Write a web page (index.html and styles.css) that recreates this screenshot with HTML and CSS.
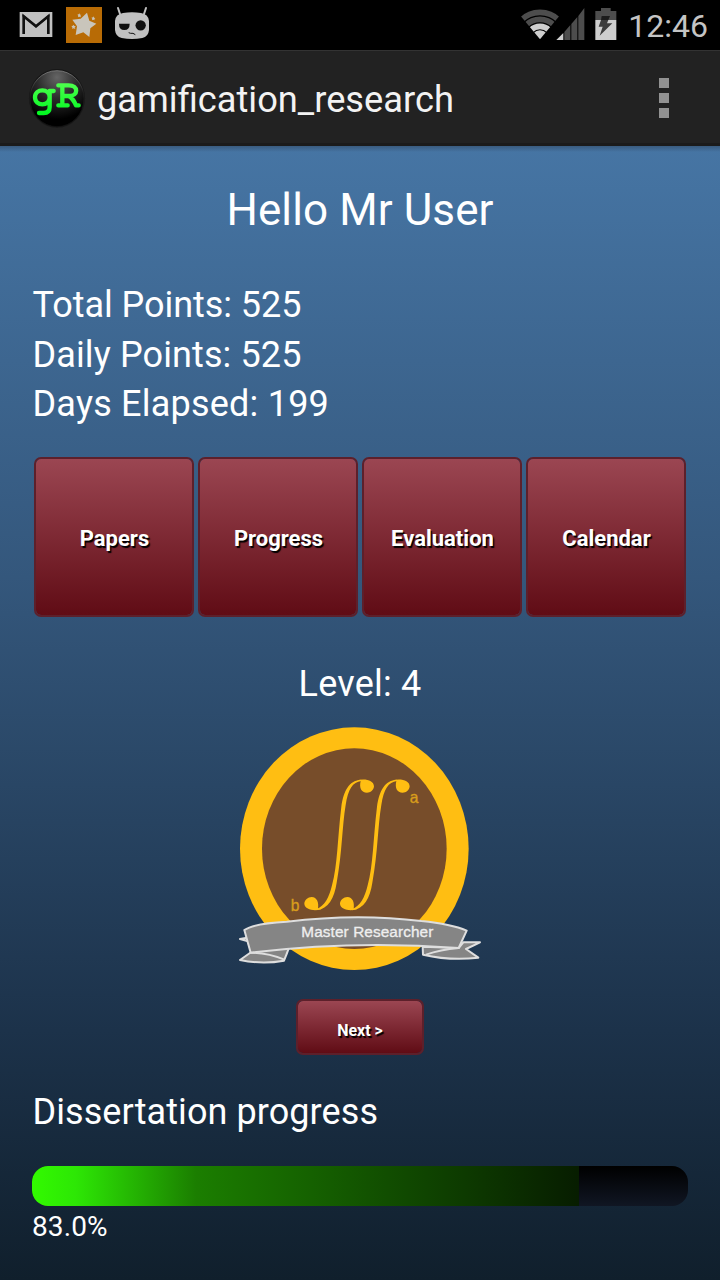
FILE: index.html
```html
<!DOCTYPE html>
<html lang="en">
<head>
<meta charset="utf-8">
<title>gamification_research</title>
<link rel="stylesheet" href="styles.css">
</head>
<body>
<header class="status-bar">
  <svg class="status-left" viewBox="0 0 480 150" aria-hidden="true">
    <path fill="#c1c1c1" d="M59 36h98v75H59z"/>
    <path fill="none" stroke="#111" stroke-width="8" d="M71 102V49l37 30 37-30v53"/>
    <path fill="none" stroke="#111" stroke-width="5" d="M68 46l40 33 40-33"/>
    <path fill="#b86b05" d="M198 21h108v108H198z"/>
    <path fill="#c9c5bb" d="M261 38l7 24 21 9-18 14-3 26-18-14-23 8 4-26-14-20 25-3z"/>
    <path fill="#c9c5bb" d="M238 40l2 4 4 0-3 3 2 5-5-2-4 2 1-5-3-3 4-1zM281 49l1 4 4 1-3 3 1 4-4-2-4 2 1-5-3-3 5-1zM221 74l2 4 5 1-4 3 2 5-5-2-4 2 0-5-3-4 5-1z"/>
    <path fill="none" stroke="#c1c1c1" stroke-width="6" stroke-linecap="round" d="M354 24l6 18M438 24l-6 18"/>
    <path fill="#c1c1c1" d="M369 39q27-4 54 0 22 3 24 24v27q-2 20-20 24-31 6-62 0-18-4-20-24V63q2-21 24-24z"/>
    <path fill="#111" d="M357 71h32q0 19-16 19t-16-19z"/>
    <circle cx="422" cy="76" r="15.500" fill="#111"/>
    <path fill="none" stroke="#111" stroke-width="3" d="M386 98l6 2 7 0 7 4"/>
  </svg>
  <div class="status-right">
    <svg class="status-signals" viewBox="50 0 310 150" aria-hidden="true">
      <clipPath id="wedge"><path d="M119 118L56 42V20h126v22z"/></clipPath>
      <g fill="none" clip-path="url(#wedge)">
        <circle cx="119" cy="118" r="81" stroke="#4d4d4d" stroke-width="17"/>
        <circle cx="119" cy="118" r="60" stroke="#4d4d4d" stroke-width="17"/>
        <circle cx="119" cy="118" r="39" stroke="#cecece" stroke-width="17"/>
        <circle cx="119" cy="118" r="13.500" stroke="#cecece" stroke-width="27"/>
      </g>
      <path fill="#cecece" d="M168 120l21-21v21z"/>
      <path fill="#4d4d4d" d="M192 96l18-21v45h-18zM213 72l18-21v69h-18zM234 48l18-24v96h-18z"/>
      <path fill="#4d4d4d" d="M302 24h29v9h17v27h-63V33h17z"/>
      <path fill="#cecece" d="M285 60h63v60h-63z"/>
      <path fill="#1c1c1c" d="M304 48h25l-5 12h-22z"/>
      <path fill="#3c3c3c" d="M302 60h22l-4 10h16l-38 37 9-27h-12z"/>
    </svg>
    <span class="clock">12:46</span>
  </div>
</header>
<div class="action-bar">
  <svg class="app-icon" viewBox="84 204 174 183" aria-hidden="true">
    <defs>
      <radialGradient id="orb" cx="50%" cy="12%" r="75%">
        <stop offset="0" stop-color="#656565"/><stop offset=".5" stop-color="#2b2b2b"/><stop offset="1" stop-color="#000"/>
      </radialGradient>
      <linearGradient id="glyph" x1="0" y1="250" x2="0" y2="345" gradientUnits="userSpaceOnUse">
        <stop offset="0" stop-color="#4dff4d"/><stop offset="1" stop-color="#00f820"/>
      </linearGradient>
      <linearGradient id="rim" x1="0" y1="0" x2="0" y2="1">
        <stop offset="0" stop-color="#999"/><stop offset=".4" stop-color="#222"/><stop offset="1" stop-color="#111"/>
      </linearGradient>
    </defs>
    <ellipse cx="171" cy="295" rx="84" ry="88" fill="#171717"/>
    <ellipse cx="171" cy="296" rx="81" ry="84" fill="url(#orb)" stroke="url(#rim)" stroke-width="2"/>
    <g fill="none" stroke="url(#glyph)" stroke-width="13" stroke-linecap="round" stroke-linejoin="round">
      <path d="M161 273h-12v48q0 18-18 18h-14M149 292c0-28-44-28-44 0s44 28 44 0"/>
      <path d="M175 256h31c30 0 30 32 0 32h-19M187 257v59M175 316h28M208 289q12 8 20 27h8"/>
    </g>
  </svg>
  <h1 class="app-name">gamification_research</h1>
  <div class="overflow"><i class="dot"></i><i class="dot"></i><i class="dot"></i></div>
</div>
<main class="content">
  <h2 class="greeting">Hello Mr User</h2>
  <div class="stats">
    <p class="total">Total Points: 525</p>
    <p class="daily">Daily Points: 525</p>
    <p class="days">Days Elapsed: 199</p>
  </div>
  <nav class="tiles">
    <button class="btn tile">Papers</button>
    <button class="btn tile">Progress</button>
    <button class="btn tile">Evaluation</button>
    <button class="btn tile">Calendar</button>
  </nav>
  <p class="level">Level: 4</p>
  <svg class="badge" viewBox="48 42 744 744" role="img" aria-label="Master Researcher">
    <ellipse cx="403" cy="416" rx="343" ry="364" fill="#ffbe12"/>
    <ellipse cx="403" cy="416" rx="277" ry="301" fill="#774d2a"/>
    <g id="integral" fill="#ffbe12">
      <path d="M424 209C387 211 371 241 364 290C352 390 353 463 336 526C327 563 314 589 289 597L289 601C326 596 343 564 350 518C367 425 366 350 377 285C384 237 398 216 424 213Z"/>
      <path d="M410 211C437 205 461 211 462 229C461 241 451 248 441 248C424 248 417 234 422 213ZM304 598C281 604 255 599 253 582C253 570 264 561 275 561C291 562 297 577 294 597Z"/>
    </g>
    <use href="#integral" x="107"/>
    <text class="bound" x="569" y="280">a</text>
    <text class="bound" x="212" y="603">b</text>
    <g fill="#858585" stroke="#dedede" stroke-width="6" stroke-linejoin="round">
      <path d="M60 687l24 7 10 32-34 24q67 14 132 2 10-24 16-42l-60-7-52 14-15-34z"/>
      <path d="M608 710l108 4 14-17 50 0-42 20 37 26q-84 10-166-9z"/>
      <path d="M92 728q54 1 101 21M716 714q-56 5-98 20" fill="none"/>
      <path d="M73 660Q103 640 200 635Q410 609 604 633Q694 642 740 662L716 714Q400 690 92 728Z"/>
    </g>
    <text class="ribbon-text" x="244" y="680" textLength="396">Master Researcher</text>
  </svg>
  <button class="btn next">Next &gt;</button>
  <section class="progress">
    <h3 class="progress-title">Dissertation progress</h3>
    <div class="track"><div class="fill"></div></div>
    <p class="percent">83.0%</p>
  </section>
</main>
</body>
</html>
```
FILE: styles.css
```css
* { box-sizing: border-box; }
body { margin: 0; width: 720px; height: 1280px; display: flex; flex-direction: column; background: #000; color: #fff; font-family: Roboto, "Noto Sans", sans-serif; overflow: hidden; }
h1, h2, h3, p { margin: 0; font-weight: 400; }
.status-bar { height: 50px; display: flex; justify-content: space-between; background: #000; }
.status-left { width: 160px; height: 50px; }
.status-right { display: flex; padding-right: 12px; }
.status-signals { width: 103.330px; height: 50px; }
.clock { width: 80px; margin-left: 8px; text-align: right; font-size: 32px; line-height: 52px; color: #c4c4c4; white-space: nowrap; }
.action-bar { height: 96px; display: flex; align-items: center; padding: 2px 51px 0 28px; background: #222; border-top: 1px solid #333; border-bottom: 3px solid #1b1b1b; }
.app-icon { width: 58px; height: 61px; }
.app-name { flex: 1; margin-left: 11px; padding-top: 3px; font-size: 36.250px; line-height: 44px; color: #f3f3f3; }
.overflow { display: flex; flex-direction: column; gap: 5px; }
.dot { width: 10px; height: 10px; background: #929292; }
.content { flex: 1; display: flex; flex-direction: column; padding: 36px 32px 0; background: linear-gradient(rgba(35, 45, 60, .35), transparent 6px), linear-gradient(#4675a4 0%, #34577c 38%, #1c324a 78%, #101f2c 100%); }
.greeting { text-align: center; font-size: 44px; line-height: 56px; letter-spacing: .1px; }
.stats { margin-top: 43px; padding-left: .5px; font-size: 36px; line-height: 49.500px; }
.total { letter-spacing: -.05px; }
.daily { letter-spacing: .12px; }
.days { letter-spacing: .22px; }
.tiles { display: flex; gap: 4px; padding: 0 2px; margin-top: 27px; }
.btn { padding: 0; border: 2px solid #5d202b; border-radius: 7px; background: linear-gradient(#9b4652, #600c15) padding-box; color: #fff; font-family: inherit; font-weight: 700; text-shadow: 1.500px 1.500px 1px #000; }
.tile { width: 160px; height: 160px; padding: 3px 0 0 1px; font-size: 22px; }
.level { margin-top: 42px; text-align: center; font-size: 36px; line-height: 50px; letter-spacing: .2px; }
.badge { width: 248px; height: 248px; margin: 15px 0 0 204px; }
.bound { font: 47px "Liberation Sans", Arial, sans-serif; fill: #d99d1c; stroke: #d99d1c; stroke-width: 1; }
.ribbon-text { font: 46px "Liberation Sans", Arial, sans-serif; fill: #eee; stroke: #eee; stroke-width: 1; }
.next { align-self: center; width: 128px; height: 56px; margin-top: 27px; padding-top: 7px; font-size: 16px; }
.progress { margin-top: 32px; }
.progress-title { padding-left: .5px; font-size: 36px; line-height: 50px; letter-spacing: .08px; }
.track { height: 40px; margin-top: 29px; border-radius: 16px; overflow: hidden; background: linear-gradient(#000, #101623); }
.fill { width: 547px; height: 100%; background: linear-gradient(90deg, #32fa00 0%, #2de705 8%, #1b7e00 30%, #071d00 100%); }
.percent { margin-top: 3px; font-size: 28px; line-height: 36px; letter-spacing: .1px; }
```
